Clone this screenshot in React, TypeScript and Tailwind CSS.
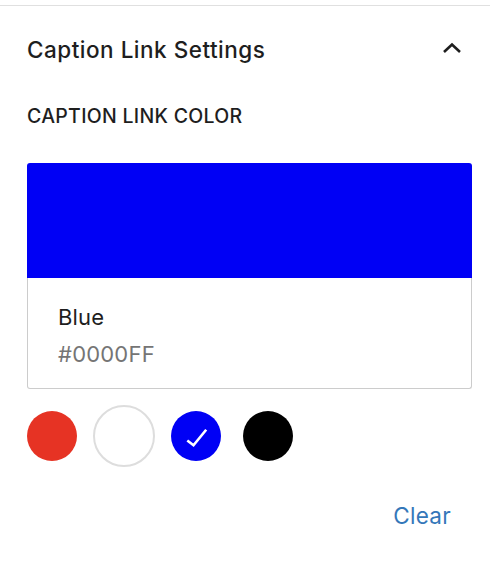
import React from "react";

export default function App() {
  const swatches = [
    { c: "#e63324", sel: false, big: false },
    { c: "#ffffff", sel: false, big: true },
    { c: "#0000f5", sel: true, big: false },
    { c: "#000000", sel: false, big: false },
  ];
  return (
    <div className="w-[490px] h-[564px] bg-white pt-[5px]" style={{ fontFamily: "Inter, 'Noto Sans', sans-serif" }}>
      <div className="border-t border-[#e0e0e0]">
        <div className="flex items-center justify-between pl-[27px] pr-[28px] pt-[30px]">
          <div className="text-[22.5px] leading-[28px] text-[#1e1e1e] font-medium tracking-[0.5px]">Caption Link Settings</div>
          <svg width="20" height="12" viewBox="0 0 20 12" className="mt-[-4px]">
            <path d="M2 10 L10 2.5 L18 10" fill="none" stroke="#1e1e1e" strokeWidth="2.6" />
          </svg>
        </div>
        <div className="pl-[27px] mt-[40px] text-[19.5px] leading-[24px] font-medium uppercase text-[#1e1e1e] tracking-[0.3px]">
          Caption Link Color
        </div>
        <div className="ml-[27px] mr-[18px] mt-[35px]">
          <div className="h-[115px] bg-[#0000f5] rounded-t-[3px]" />
          <div className="h-[111px] border border-t-0 border-[#cccccc] rounded-b-[3px] pl-[30px] pt-[25px]">
            <div className="text-[22px] leading-[28px] text-[#1e1e1e] tracking-[0.2px]">Blue</div>
            <div className="mt-[9px] text-[22px] leading-[28px] text-[#757575] tracking-[0.2px]">#0000FF</div>
          </div>
        </div>
        <div className="flex items-center gap-[22px] pl-[27px] mt-[22px] h-[50px]">
          {swatches.map((s, i) => (
            <div key={i} className="w-[50px] h-[50px] flex items-center justify-center">
              <div
                className={
                  s.big
                    ? "w-[62px] h-[62px] shrink-0 rounded-full border-2 border-[#dddddd] bg-white"
                    : "w-[50px] h-[50px] shrink-0 rounded-full flex items-center justify-center"
                }
                style={s.big ? undefined : { backgroundColor: s.c }}
              >
                {s.sel && (
                  <svg width="26" height="26" viewBox="0 0 26 26" className="overflow-visible">
                    <path d="M4.3 17.5 L10.5 22.3 L23.2 6.7" fill="none" stroke="#ffffff" strokeWidth="2.6" />
                  </svg>
                )}
              </div>
            </div>
          ))}
        </div>
        <div className="flex justify-end pr-[39px] mt-[41px]">
          <div className="text-[22.5px] leading-[28px] text-[#3477b9] tracking-[0.3px]">Clear</div>
        </div>
      </div>
    </div>
  );
}
